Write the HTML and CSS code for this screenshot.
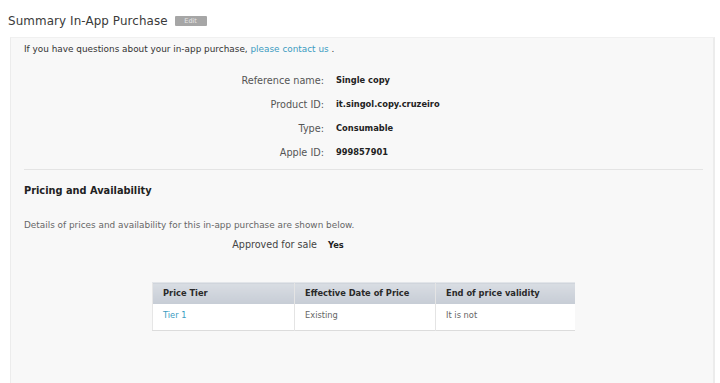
FILE: index.html
```html
<!DOCTYPE html>
<html>
<head>
<meta charset="utf-8">
<link rel="stylesheet" href="styles.css">
</head>
<body>
<div class="page">
  <div class="title-row">
    <h1 class="title">Summary In-App Purchase</h1>
    <span class="edit">Edit</span>
  </div>
  <div class="panel">
    <p class="intro">If you have questions about your in-app purchase, <a class="link">please contact us</a> .</p>
    <div class="fields">
      <div class="field"><span class="label">Reference name:</span><span class="value">Single copy</span></div>
      <div class="field"><span class="label">Product ID:</span><span class="value">it.singol.copy.cruzeiro</span></div>
      <div class="field"><span class="label">Type:</span><span class="value">Consumable</span></div>
      <div class="field"><span class="label">Apple ID:</span><span class="value">999857901</span></div>
    </div>
    <hr class="divider">
    <h2 class="section">Pricing and Availability</h2>
    <p class="details">Details of prices and availability for this in-app purchase are shown below.</p>
    <div class="approved"><span class="alabel">Approved for sale</span><span class="avalue">Yes</span></div>
    <table class="prices">
      <thead>
        <tr><th>Price Tier</th><th>Effective Date of Price</th><th>End of price validity</th></tr>
      </thead>
      <tbody>
        <tr><td><a class="link">Tier 1</a></td><td>Existing</td><td>It is not</td></tr>
      </tbody>
    </table>
  </div>
</div>
</body>
</html>
```
FILE: styles.css
```css
html, body {
  margin: 0;
  padding: 0;
  background: #ffffff;
}
body {
  font-family: "DejaVu Sans", "Liberation Sans", sans-serif;
  color: #333;
}
.page {
  padding: 11px 5px 0 10px;
}
.title-row {
  display: flex;
  align-items: center;
  gap: 7px;
  height: 20px;
  margin-left: -2px;
}
.title {
  margin: 0;
  font-size: 11.9px;
  font-weight: normal;
  color: #3a3a3a;
  letter-spacing: 0.1px;
}
.edit {
  background: #a6a6a6;
  color: #e6e6e6;
  font-size: 6.5px;
  width: 32px;
  height: 10px;
  line-height: 10px;
  text-align: center;
  border-radius: 1px;
}
.panel {
  margin-top: 6px;
  background: #f8f8f8;
  border-left: 1px solid #ececec;
  border-right: 2px solid #ececec;
  border-top: 1px solid #f0f0f0;
  padding: 5px 10px 0 13px;
  font-size: 8.9px;
  height: calc(100vh - 37px);
  box-sizing: border-box;
}
.intro {
  margin: 0;
  color: #333;
  line-height: 12px;
}
.link {
  color: #3b9bc1;
}
.fields {
  margin-top: 13px;
  display: flex;
  flex-direction: column;
}
.field {
  display: grid;
  grid-template-columns: 300px 1fr;
  column-gap: 12px;
  height: 24px;
  align-items: center;
}
.label {
  text-align: right;
  font-size: 9.7px;
  color: #555;
}
.value {
  font-weight: bold;
  color: #222;
  font-size: 8.3px;
}
.divider {
  border: 0;
  border-top: 1px solid #e4e4e4;
  margin: 5px 0 0 0;
}
.section {
  margin: 15px 0 0 0;
  font-size: 9.8px;
  line-height: 12px;
  font-weight: bold;
  color: #222;
}
.details {
  margin: 22px 0 0 0;
  color: #666;
  line-height: 12px;
}
.approved {
  display: grid;
  grid-template-columns: 293px 1fr;
  column-gap: 11px;
  margin-top: 8px;
  line-height: 12px;
  align-items: center;
}
.alabel {
  text-align: right;
  font-size: 9.6px;
  color: #444;
}
.avalue {
  font-weight: bold;
  color: #222;
  font-size: 8.3px;
}
.prices {
  margin: 31px 0 0 128px;
  border-collapse: collapse;
  width: 423px;
  background: #ffffff;
  border-bottom: 1px solid #dcdcdc;
  border-left: 1px solid #e6e6e6;
  table-layout: fixed;
}
.prices th {
  background: linear-gradient(#d9dde3, #c6ccd5);
  text-align: left;
  font-weight: bold;
  color: #2a2a2a;
  font-size: 8.3px;
  height: 21px;
  padding: 0 10px;
  border-top: 1px solid #e2e5e9;
  box-sizing: border-box;
}
.prices th + th, .prices td + td {
  border-left: 1px solid #e4e4e4;
}
.prices th:nth-child(1) { width: 142px; }
.prices th:nth-child(2) { width: 141px; }
.prices td {
  height: 27px;
  padding: 0 10px;
  vertical-align: top;
  padding-top: 6px;
  color: #666;
  font-size: 8.3px;
  box-sizing: border-box;
}
```
